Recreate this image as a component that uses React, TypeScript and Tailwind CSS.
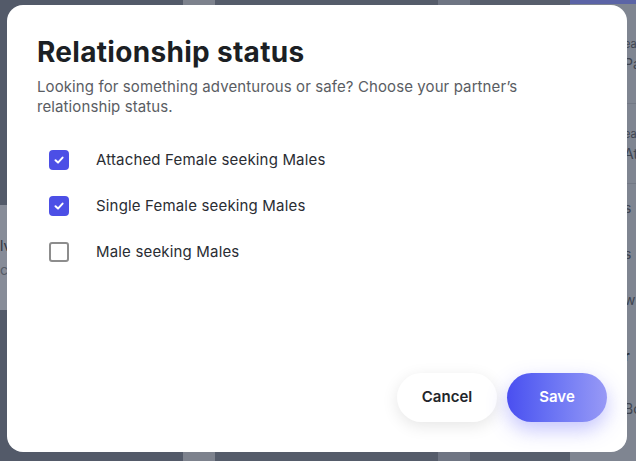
import React from "react";

const options = [
  { label: "Attached Female seeking Males", checked: true },
  { label: "Single Female seeking Males", checked: true },
  { label: "Male seeking Males", checked: false },
];

function Check({ checked }: { checked: boolean }) {
  if (checked) {
    return (
      <span className="flex h-[20px] w-[20px] shrink-0 items-center justify-center rounded-[4px] bg-[#4c4fe6]">
        <svg width="12" height="12" viewBox="0 0 12 12" fill="none">
          <path d="M2.5 6.3 L5 8.6 L9.6 3.6" stroke="white" strokeWidth="2" strokeLinecap="round" strokeLinejoin="round" />
        </svg>
      </span>
    );
  }
  return <span className="h-[20px] w-[20px] shrink-0 rounded-[3px] border-2 border-[#8d8d8d] bg-white" />;
}

export default function App() {
  return (
    <div
      className="relative h-[461px] w-[636px] overflow-hidden bg-[#565d6b]"
      style={{ fontFamily: "Inter, 'Noto Sans', sans-serif" }}
    >
      {/* dimmed page behind */}
      <div className="flex h-full w-full">
        <div className="flex w-[183px] flex-col bg-[#535a69]">
          <div className="h-[205px]" />
          <div className="flex h-[105px] w-[40px] flex-col justify-center overflow-hidden bg-[#878c98] text-[14px] leading-[24px] text-[#2e3440]">
            <span>lv</span>
            <span className="text-[#555b66]">ct</span>
          </div>
        </div>
        <div className="w-[32px] bg-[#7d828d]" />
        <div className="w-[223px] bg-[#555c6a]" />
        <div className="w-[32px] bg-[#6f7583]" />
        <div className="w-[100px] bg-[#575e6c]" />
        <div className="flex flex-1 flex-col bg-[#7f8591]">
          <div className="h-[4px] bg-[#5b64a6]" />
          <div className="flex flex-1 flex-col items-end text-[14px] text-[#3e4450]">
            <div className="flex h-[100px] w-[12px] flex-col justify-center overflow-hidden border-b border-[#727884] leading-[20px]">
              <span className="text-[11px]">ea</span>
              <span>Pa</span>
            </div>
            <div className="flex h-[80px] w-[12px] flex-col justify-center overflow-hidden border-b border-[#727884] leading-[20px]">
              <span className="text-[11px]">ea</span>
              <span>At</span>
            </div>
            <div className="flex h-[46px] w-[12px] items-center">s</div>
            <div className="flex h-[46px] w-[12px] items-center">s</div>
            <div className="flex h-[46px] w-[12px] items-center overflow-hidden">w</div>
            <div className="flex h-[66px] w-[12px] items-center font-bold text-[#2b303a]">r</div>
            <div className="flex h-[40px] w-[12px] items-center overflow-hidden">Bo</div>
          </div>
        </div>
      </div>

      {/* modal overlay */}
      <div className="absolute inset-0 pl-[7px] pt-[5px]">
        <div className="flex h-[447px] w-[620px] flex-col rounded-[16px] bg-white pb-[30px] pl-[30px] pr-[20px] pt-[30px]">
          <h1 className="text-[28px] font-bold leading-[34px] tracking-[0.3px] text-[#1c1f24]">
            Relationship status
          </h1>
          <p className="mt-[8px] w-[510px] text-[15px] leading-[20px] tracking-[0.1px] text-[#5a5d63]">
            Looking for something adventurous or safe? Choose your partner’s relationship status.
          </p>
          <div className="mt-[33px] flex flex-col gap-[26px] pl-[12px]">
            {options.map((o) => (
              <label key={o.label} className="flex h-[20px] items-center gap-[27px]">
                <Check checked={o.checked} />
                <span className="text-[15px] leading-[20px] tracking-[0.17px] text-[#2a2d33]">{o.label}</span>
              </label>
            ))}
          </div>
          <div className="flex-1" />
          <div className="flex justify-end gap-[10px]">
            <button className="h-[49px] w-[100px] rounded-full bg-white text-[15px] font-semibold text-[#22252a] shadow-[0_4px_16px_rgba(0,0,0,0.10)]">
              Cancel
            </button>
            <button className="h-[49px] w-[100px] rounded-full bg-gradient-to-r from-[#4a4ef0] to-[#9899f6] text-[15px] font-semibold text-white shadow-[0_8px_20px_rgba(90,90,250,0.35)]">
              Save
            </button>
          </div>
        </div>
      </div>
    </div>
  );
}
